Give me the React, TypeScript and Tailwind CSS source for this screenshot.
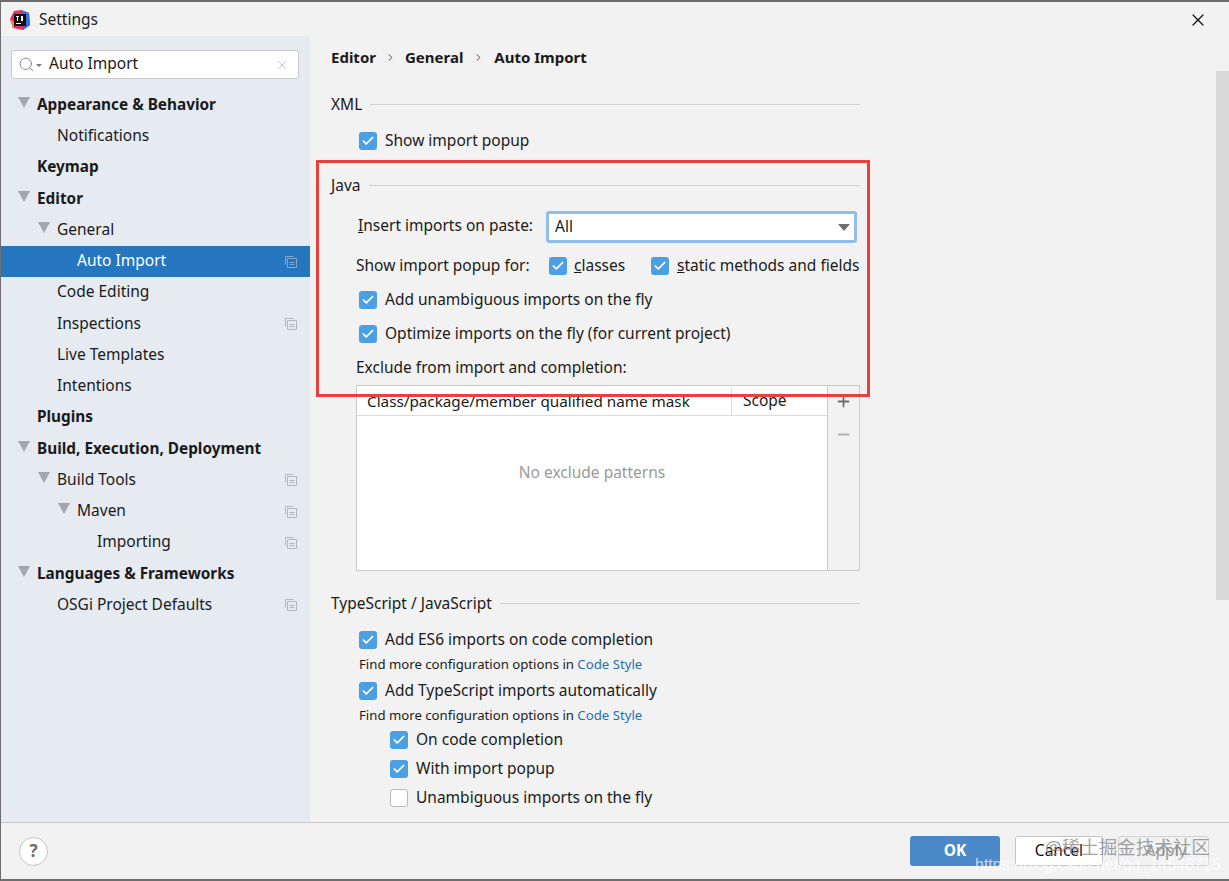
import { Plus, Minus, X, Check, Search, ChevronRight } from 'lucide-react';

const font = { fontFamily: '"Noto Sans", "Noto Sans CJK SC", sans-serif' };

const treeItems = [
  { label: 'Appearance & Behavior', level: 0, bold: true, arrow: true },
  { label: 'Notifications', level: 1 },
  { label: 'Keymap', level: 0, bold: true },
  { label: 'Editor', level: 0, bold: true, arrow: true },
  { label: 'General', level: 1, arrow: true },
  { label: 'Auto Import', level: 2, selected: true, copy: true },
  { label: 'Code Editing', level: 1 },
  { label: 'Inspections', level: 1, copy: true },
  { label: 'Live Templates', level: 1 },
  { label: 'Intentions', level: 1 },
  { label: 'Plugins', level: 0, bold: true },
  { label: 'Build, Execution, Deployment', level: 0, bold: true, arrow: true },
  { label: 'Build Tools', level: 1, arrow: true, copy: true },
  { label: 'Maven', level: 2, arrow: true, copy: true },
  { label: 'Importing', level: 3, copy: true },
  { label: 'Languages & Frameworks', level: 0, bold: true, arrow: true },
  { label: 'OSGi Project Defaults', level: 1, copy: true },
];

function CopyIcon({ light }: { light?: boolean }) {
  const color = light ? '#7fa9d3' : '#b4b8bc';
  return (
    <svg width="12" height="12" viewBox="0 0 12 12" fill="none" stroke={color} strokeWidth="1">
      <path d="M0.5 8.5V0.5H8.5" />
      <path d="M2.5 2.5H11.5V11.5H2.5Z" />
      <path d="M4.5 6.5H9.5M4.5 8.5H9.5" />
    </svg>
  );
}

function Arrow() {
  return <span className="w-0 h-0 border-l-[6px] border-r-[6px] border-t-[11px] border-l-transparent border-r-transparent border-t-[#a3a6aa]" />;
}

function TreeRow({ item }: { item: (typeof treeItems)[number] }) {
  return (
    <div className={`relative flex items-center h-[31.25px] pr-[13px] pb-[2px] ${item.selected ? 'bg-[#2675bf] text-white' : 'text-[#1a1a1a]'}`}>
      {item.arrow && (
        <span className={`flex ${item.level === 0 ? 'ml-[17px]' : item.level === 1 ? 'ml-[37px]' : 'ml-[57px]'} -mt-1`}>
          <Arrow />
        </span>
      )}
      <span
        className={`whitespace-nowrap ${item.bold ? 'font-bold text-[15.35px]' : 'text-[15.5px]'} ${
          item.arrow ? 'ml-[8px]' : item.level === 0 ? 'ml-[36px]' : item.level === 1 ? 'ml-[56px]' : item.level === 2 ? 'ml-[76px]' : 'ml-[96px]'
        } ${item.arrow ? '-translate-x-px' : ''}`}
      >
        {item.label}
      </span>
      {item.copy && (
        <span className="ml-auto flex mt-[2px]">
          <CopyIcon light={item.selected} />
        </span>
      )}
    </div>
  );
}

function CheckBox({ checked = true }: { checked?: boolean }) {
  return checked ? (
    <span className="flex items-center justify-center w-[18px] h-[18px] rounded-[3px] bg-[#4c9fe3] shrink-0">
      <Check size={14} strokeWidth={3} color="#ffffff" />
    </span>
  ) : (
    <span className="block w-[18px] h-[18px] rounded-[3px] bg-white border border-[#b9b9b9] shrink-0" />
  );
}

function CheckRow({ label, className = '', checked = true }: { label: string; className?: string; checked?: boolean }) {
  return (
    <div className={`flex items-center gap-[8px] text-[15.5px] text-[#1a1a1a] whitespace-nowrap ${className}`}>
      <CheckBox checked={checked} />
      <span>{label}</span>
    </div>
  );
}

function SectionTitle({ label }: { label: string }) {
  return (
    <div className="flex items-center gap-[8px] text-[15.5px] text-[#1a1a1a] h-[22px]">
      <span className="whitespace-nowrap mt-[2px]">{label}</span>
      <span className="flex-1 h-px bg-[#d1d1d1]" />
    </div>
  );
}

function FindMore() {
  return (
    <div className="ml-[28px] text-[13.2px] text-[#1a1a1a] h-[20px] leading-[20px] whitespace-nowrap">
      Find more configuration options in <span className="text-[#2470b3]">Code Style</span>
    </div>
  );
}

export default function App() {
  return (
    <div style={font} className="relative w-[1229px] h-[881px] overflow-hidden bg-[#f2f2f2] border-t-2 border-l border-b-2 border-[#6e6e6e] flex flex-col">
      <div className="h-[34px] flex items-center shrink-0 pt-[2px] pl-[9px] pr-[21px]">
        <svg width="20" height="20" viewBox="0 0 20 20">
          <path d="M4 1L11 0L19 3L20 15L13 20L3 18L0 9Z" fill="#e0325f" />
          <path d="M11 0L19 3L20 15L13 20L15 8Z" fill="#3a6de0" />
          <path d="M0 9L5 13L3 18Z" fill="#f58a1f" />
          <rect x="4" y="4" width="12" height="12" fill="#111111" />
          <rect x="6" y="13" width="5" height="1" fill="#ffffff" />
          <rect x="6" y="6" width="3" height="1" fill="#ffffff" />
          <rect x="7" y="6" width="1" height="5" fill="#ffffff" />
          <rect x="11" y="6" width="2" height="5" fill="#ffffff" />
        </svg>
        <span className="ml-[9px] text-[15.5px] text-[#222222]">Settings</span>
        <X size={20} strokeWidth={1.5} color="#111111" className="ml-auto" />
      </div>

      <div className="flex flex-1 min-h-0">
        <aside className="w-[309px] shrink-0 bg-[#e6ebf2] flex flex-col">
          <div className="mt-[14px] mx-[10px] w-[288px] h-[29px] bg-white border border-[#c9c9c9] rounded-[3px] flex items-center pl-[6px] pr-[6px]">
            <Search size={17} strokeWidth={1.2} color="#777777" className="shrink-0" />
            <span className="w-0 h-0 ml-[1px] mt-[2px] border-l-[3px] border-r-[3px] border-t-[3px] border-l-transparent border-r-transparent border-t-[#777777]" />
            <span className="ml-[7px] text-[15.5px] text-[#1a1a1a] mb-[2px]">Auto Import</span>
            <X size={14} strokeWidth={1.2} color="#b5b5b5" className="ml-auto mr-[3px]" />
          </div>
          <div className="mt-[10.75px]">
            {treeItems.map((item) => (
              <TreeRow key={item.label} item={item} />
            ))}
          </div>
        </aside>

        <main className="relative flex-1 min-w-0 pl-[21px]">
          <div className="w-[529px]">
            <div className="flex items-center h-[22px] mt-[10px] text-[15px] font-bold text-[#1a1a1a]">
              <span>Editor</span>
              <ChevronRight size={11} strokeWidth={2} color="#333333" className="mx-[9px]" />
              <span>General</span>
              <ChevronRight size={11} strokeWidth={2} color="#333333" className="mx-[10px]" />
              <span>Auto Import</span>
            </div>

            <div className="mt-[25px]">
              <SectionTitle label="XML" />
            </div>
            <CheckRow label="Show import popup" className="mt-[15px] ml-[28px] h-[22px]" />

            <div className="mt-[22px]">
              <SectionTitle label="Java" />
            </div>
            <div className="mt-[15px] ml-[27px] flex items-center h-[32px] text-[15.5px] text-[#1a1a1a]">
              <span className="w-[188px] shrink-0 whitespace-nowrap pb-[3px]">
                <span className="underline">I</span>nsert imports on paste:
              </span>
              <div className="w-[311px] h-[32px] shrink-0 bg-white border-[3px] border-[#91bdeb] rounded-[3px] flex items-center pl-[6px] pr-[4px]">
                <span>All</span>
                <span className="ml-auto w-0 h-0 border-l-[6px] border-r-[6px] border-t-[7px] border-l-transparent border-r-transparent border-t-[#6e6e6e]" />
              </div>
            </div>
            <div className="mt-[12px] ml-[25px] flex items-center h-[22px] text-[15.5px] text-[#1a1a1a] whitespace-nowrap">
              <span className="w-[193px] shrink-0">Show import popup for:</span>
              <CheckBox />
              <span className="ml-[7px] w-[77px] shrink-0">
                <span className="underline">c</span>lasses
              </span>
              <CheckBox />
              <span className="ml-[8px]">
                <span className="underline">s</span>tatic methods and fields
              </span>
            </div>
            <CheckRow label="Add unambiguous imports on the fly" className="mt-[12px] ml-[28px] h-[22px]" />
            <CheckRow label="Optimize imports on the fly (for current project)" className="mt-[12px] ml-[28px] h-[22px]" />
            <div className="mt-[11px] ml-[25px] h-[22px] leading-[22px] text-[15.5px] text-[#1a1a1a] whitespace-nowrap">Exclude from import and completion:</div>

            <div className="mt-[7px] ml-[25px] w-[504px] h-[186px] border border-[#c9c9c9] flex">
              <div className="flex-1 bg-white flex flex-col">
                <div className="h-[30px] shrink-0 border-b border-[#dcdcdc] flex items-center text-[15.5px] text-[#1a1a1a]">
                  <span className="w-[375px] pl-[10px] border-r border-[#dcdcdc] h-[28px] leading-[28px] whitespace-nowrap text-[15.25px]">Class/package/member qualified name mask</span>
                  <span className="pl-[11px]">Scope</span>
                </div>
                <div className="flex-1 flex items-center justify-center text-[15.5px] text-[#9a9a9a] pb-[41px]">No exclude patterns</div>
              </div>
              <div className="w-[32px] border-l border-[#c9c9c9] bg-[#f2f2f2] flex flex-col items-center pt-[7px] gap-[16px]">
                <Plus size={17} strokeWidth={2.5} color="#6e6e6e" />
                <Minus size={17} strokeWidth={2.5} color="#b0b0b0" />
              </div>
            </div>

            <div className="mt-[21px]">
              <SectionTitle label="TypeScript / JavaScript" />
            </div>
            <CheckRow label="Add ES6 imports on code completion" className="mt-[15px] ml-[28px] h-[22px]" />
            <div className="mt-[3px]">
              <FindMore />
            </div>
            <CheckRow label="Add TypeScript imports automatically" className="mt-[6px] ml-[28px] h-[22px]" />
            <div className="mt-[3px]">
              <FindMore />
            </div>
            <CheckRow label="On code completion" className="mt-[4px] ml-[59px] h-[22px]" />
            <CheckRow label="With import popup" className="mt-[7px] ml-[59px] h-[22px]" />
            <CheckRow label="Unambiguous imports on the fly" checked={false} className="mt-[7px] ml-[59px] h-[22px]" />
          </div>

          <div className="absolute right-0 top-[35px] w-[13px] h-[529px] bg-[#d9d9d9]" />
        </main>
      </div>

      <footer className="h-[57px] shrink-0 border-t border-[#c9c9c9] flex items-center pl-[18px] pr-[20px]">
        <span className="flex items-center justify-center w-[29px] h-[29px] rounded-full bg-white border border-[#c4c4c4] text-[17px] font-bold text-[#6e6e6e]">?</span>
        <button className="ml-auto w-[90px] h-[30px] rounded-[3px] bg-[#4a88c7] text-white text-[15.5px] font-bold">OK</button>
        <button className="ml-[15px] w-[88px] h-[30px] rounded-[3px] bg-white border border-[#c4c4c4] text-[15.5px] text-[#111111]">Cancel</button>
        <button className="ml-[15px] w-[91px] h-[30px] pl-[5px] rounded-[3px] bg-[#f2f2f2] border border-[#d0d0d0] text-[15.5px] text-[#999999]">Apply</button>
      </footer>

      <div className="absolute left-[315px] top-[158px] w-[554px] h-[237px] border-[3px] border-[#e8403f] pointer-events-none" />
      <div className="absolute left-[1044px] top-[831px] text-[18.5px] text-[#8a8a8a]/80 whitespace-nowrap">@稀土掘金技术社区</div>
      <div className="absolute left-[974px] top-[851px] text-[16px] text-white/70 whitespace-nowrap" style={{ fontFamily: '"Liberation Sans", sans-serif' }}>https://blog.csdn.net/qq_14548715</div>
    </div>
  );
}
